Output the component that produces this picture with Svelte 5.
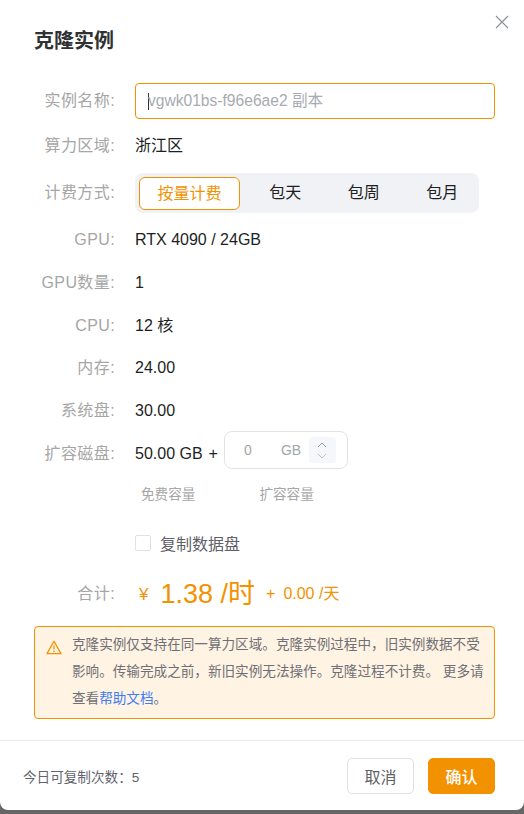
<script>
  const specs = [
    ['GPU:', 'RTX 4090 / 24GB'],
    ['GPU数量:', '1'],
    ['CPU:', '12 核'],
    ['内存:', '24.00'],
    ['系统盘:', '30.00']
  ];
  const billing = ['包天', '包周', '包月'];
</script>

<div class="dialog">
  <button class="close" aria-label="关闭">
    <svg width="14" height="14" viewBox="0 0 14 14"><path d="M1 1L13 13M13 1L1 13" stroke="#8a8f99" stroke-width="1.1" fill="none"/></svg>
  </button>
  <h2 class="title">克隆实例</h2>

  <div class="form">
    <div class="row name-row">
      <span class="label">实例名称:</span>
      <div class="input"><span class="caret"></span><span class="placeholder">vgwk01bs-f96e6ae2 副本</span></div>
    </div>
    <div class="row region-row">
      <span class="label">算力区域:</span>
      <span class="value">浙江区</span>
    </div>
    <div class="row billing-row">
      <span class="label">计费方式:</span>
      <div class="segments">
        <span class="seg active">按量计费</span>
        {#each billing as b}
          <span class="seg">{b}</span>
        {/each}
      </div>
    </div>
    <div class="specs">
      {#each specs as [k, v]}
        <div class="row spec-row">
          <span class="label">{k}</span>
          <span class="value">{v}</span>
        </div>
      {/each}
    </div>
    <div class="row disk-row">
      <span class="label low">扩容磁盘:</span>
      <span class="value low">50.00 GB</span>
      <span class="value plus low">+</span>
      <div class="stepper">
        <span class="num">0</span>
        <span class="unit">GB</span>
        <span class="arrows">
          <svg width="10" height="6" viewBox="0 0 10 6"><path d="M1 5L5 1L9 5" stroke="#8a8f99" stroke-width="0.9" fill="none"/></svg>
          <svg width="10" height="6" viewBox="0 0 10 6"><path d="M1 1L5 5L9 1" stroke="#b4b8c0" stroke-width="0.9" fill="none"/></svg>
        </span>
      </div>
    </div>
    <div class="captions">
      <span class="cap-free">免费容量</span>
      <span class="cap-ext">扩容容量</span>
    </div>
    <label class="check">
      <span class="box"></span>
      <span>复制数据盘</span>
    </label>
    <div class="row total-row">
      <span class="label">合计:</span>
      <span class="yen">¥</span>
      <span class="price">1.38 /时</span>
      <span class="plus-small">+</span>
      <span class="daily">0.00 /天</span>
    </div>
  </div>

  <div class="notice">
    <svg class="warn" width="16" height="15" viewBox="0 0 16 15"><path d="M8 1.2L15 13.6H1Z" stroke="#f39200" stroke-width="1.3" stroke-linejoin="round" fill="none"/><path d="M8 5.5V9.6" stroke="#f39200" stroke-width="1.3"/><circle cx="8" cy="11.4" r="0.8" fill="#f39200"/></svg>
    <p>克隆实例仅支持在同一算力区域。克隆实例过程中&#xFF0C;旧实例数据不受影响。传输完成之前&#xFF0C;新旧实例无法操作。克隆过程不计费。 更多请查看<a href="#help">帮助文档</a>。</p>
  </div>

  <div class="footer">
    <span class="quota">今日可复制次数&#xFF1A;5</span>
    <div class="actions">
      <button class="btn cancel">取消</button>
      <button class="btn ok">确认</button>
    </div>
  </div>
</div>

<style>
  :global(body) {
    margin: 0;
    background: #666;
    font-family: "Liberation Sans", "Noto Sans CJK SC", sans-serif;
  }
  .dialog {
    position: relative;
    box-sizing: border-box;
    width: 524px;
    height: 810px;
    background: #fff;
    border-radius: 0 0 8px 8px;
    padding: 29px 0 0;
    overflow: hidden;
  }
  .close {
    position: absolute;
    top: 15px;
    right: 15px;
    width: 14px;
    height: 14px;
    padding: 0;
    border: 0;
    background: none;
    display: flex;
  }
  .title {
    margin: 0 0 0 34px;
    font-size: 20px;
    line-height: 24px;
    font-weight: 700;
    color: #303133;
  }
  .form {
    padding-top: 30px;
  }
  .row {
    display: flex;
    align-items: center;
    font-size: 16px;
    line-height: 26px;
  }
  .label {
    flex: 0 0 115px;
    margin-right: 20px;
    text-align: right;
    color: #a6a6a6;
    white-space: nowrap;
    letter-spacing: 0.4px;
  }
  .value {
    color: #1d1f24;
  }
  .low {
    margin-top: 5px;
  }
  .name-row {
    height: 36px;
  }
  .input {
    box-sizing: border-box;
    width: 360px;
    height: 36px;
    border: 1px solid #f39200;
    border-radius: 4px;
    display: flex;
    align-items: center;
    padding-left: 12px;
  }
  .caret {
    width: 1px;
    height: 17px;
    background: #333;
    margin-right: -1px;
  }
  .placeholder {
    color: #a8abb2;
    font-size: 15.6px;
  }
  .region-row {
    height: 26px;
    margin-top: 14px;
  }
  .billing-row {
    height: 40px;
    margin-top: 14px;
  }
  .segments {
    box-sizing: border-box;
    width: 344px;
    height: 40px;
    display: flex;
    align-items: center;
    padding: 0 0 0 4px;
    background: #f1f2f5;
    border-radius: 8px;
  }
  .seg {
    box-sizing: border-box;
    flex: none;
    width: 78.5px;
    height: 33px;
    line-height: 31px;
    text-align: center;
    color: #1d1f24;
    font-size: 16px;
  }
  .seg.active {
    width: 101px;
    margin-right: 6px;
    color: #f39200;
    background: #fff;
    border: 1px solid #f39200;
    border-radius: 6px;
  }
  .specs {
    margin-top: 14px;
    display: flex;
    flex-direction: column;
    gap: 16.75px;
  }
  .spec-row {
    height: 26px;
  }
  .disk-row {
    margin-top: 8px;
    height: 38px;
  }
  .plus {
    margin: 5px 6px 0 6px;
  }
  .stepper {
    box-sizing: border-box;
    width: 124px;
    height: 38px;
    border: 1px solid #e2e3ea;
    border-radius: 8px;
    display: flex;
    align-items: center;
    position: relative;
    top: -1px;
  }
  .num {
    width: 46px;
    text-align: center;
    color: #a3a6ad;
    font-size: 14px;
  }
  .unit {
    margin-left: 10px;
    width: 28px;
    color: #a3a6ad;
    font-size: 14px;
  }
  .arrows {
    box-sizing: border-box;
    width: 27px;
    height: 26px;
    background: #f6f7fa;
    border-radius: 3px;
    display: flex;
    flex-direction: column;
    align-items: center;
    justify-content: center;
    gap: 5px;
  }
  .captions {
    display: flex;
    margin-top: 15px;
    font-size: 13.6px;
    line-height: 20px;
    color: #a6a6a6;
  }
  .cap-free {
    margin-left: 141px;
  }
  .cap-ext {
    margin-left: 64px;
  }
  .check {
    display: flex;
    align-items: center;
    gap: 9px;
    margin: 27px 0 0 135px;
    height: 22px;
    font-size: 16px;
    color: #5f6167;
  }
  .box {
    box-sizing: border-box;
    width: 16px;
    height: 16px;
    border: 1px solid #dfe1e8;
    border-radius: 2px;
  }
  .total-row {
    margin-top: 24px;
    height: 32px;
    color: #f39200;
  }
  .yen {
    font-size: 17px;
    margin: 0 12px 0 4px;
    position: relative;
    top: 1px;
  }
  .price {
    font-size: 27px;
  }
  .plus-small {
    font-size: 16px;
    margin-left: 11px;
  }
  .daily {
    font-size: 16px;
    margin-left: 8px;
  }
  .notice {
    box-sizing: border-box;
    margin: 16px 29px 0 34px;
    width: 461px;
    height: 93px;
    padding: 4px 8px 0 11px;
    display: flex;
    align-items: flex-start;
    gap: 10px;
    background: #fff3e3;
    border: 1px solid #f39200;
    border-radius: 4px;
  }
  .warn {
    flex: none;
    margin-top: 9px;
  }
  .notice p {
    margin: 0;
    font-size: 13.6px;
    line-height: 27px;
    color: #6f7076;
  }
  .notice a {
    color: #3f7bf5;
    text-decoration: none;
  }
  .footer {
    position: absolute;
    left: 0;
    right: 0;
    bottom: 0;
    height: 70px;
    box-sizing: border-box;
    border-top: 1px solid #e9eaf0;
    padding: 0 29px 0 23px;
    display: flex;
    align-items: center;
    justify-content: space-between;
  }
  .quota {
    font-size: 13.6px;
    color: #62656d;
  }
  .actions {
    display: flex;
    gap: 14px;
  }
  .btn {
    box-sizing: border-box;
    width: 67px;
    height: 36px;
    border-radius: 5px;
    font: inherit;
    font-size: 16px;
    padding: 0;
  }
  .cancel {
    background: #fff;
    border: 1px solid #dfe1e8;
    color: #5f6167;
  }
  .ok {
    background: #f39200;
    border: 1px solid #f39200;
    color: #fff;
    font-weight: 500;
  }
</style>
